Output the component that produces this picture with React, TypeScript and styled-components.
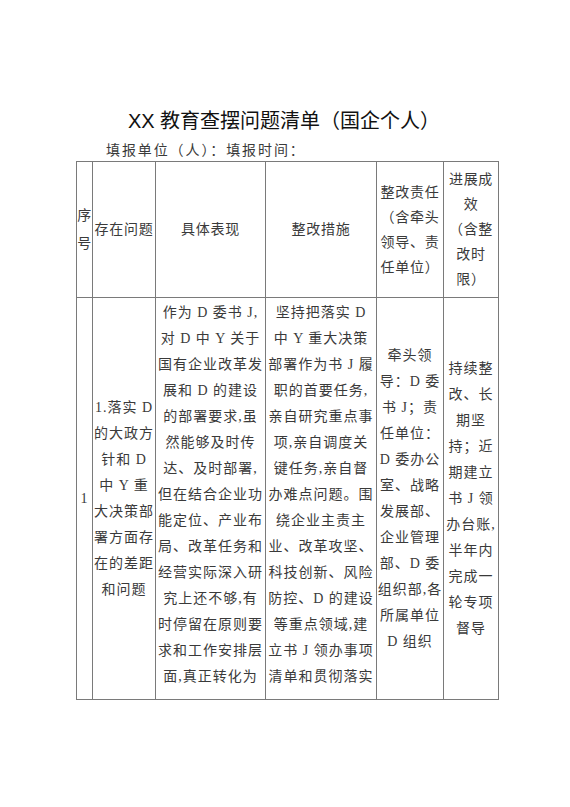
import React from "react";
import styled, { createGlobalStyle } from "styled-components";

const GlobalStyle = createGlobalStyle`
  html, body {
    margin: 0;
    padding: 0;
    background: #ffffff;
  }
  body {
    font-family: "Liberation Serif", "Noto Sans CJK SC", serif;
    color: #333333;
  }
`;

const Page = styled.main`
  width: 570px;
  min-height: 807px;
  padding-top: 107px;
  box-sizing: border-box;
  display: flex;
  flex-direction: column;
`;

const Title = styled.h1`
  margin: 0;
  font-family: "Liberation Sans", "Noto Sans CJK SC", sans-serif;
  font-weight: 400;
  font-size: 20px;
  line-height: 28px;
  color: #111111;
  text-align: center;
  padding-right: 2px;
`;

const Subtitle = styled.div`
  margin-top: 6px;
  padding-left: 106px;
  font-family: "Liberation Serif", "Noto Sans CJK SC", serif;
  font-size: 14px;
  line-height: 20px;
  letter-spacing: 1.9px;
  color: #3a3a3a;
`;

const Table = styled.section`
  margin-left: 76px;
  width: fit-content;
  display: grid;
  grid-template-columns: 15px 62px 109px 110px 66px 54px;
  grid-template-rows: 135px 401px;
  gap: 1px;
  background: #7a7a7a;
  border: 1px solid #7a7a7a;
`;

const Cell = styled.div<{ $lh: number; $top?: boolean; $ls?: number }>`
  background: #ffffff;
  display: flex;
  flex-direction: column;
  align-items: center;
  justify-content: ${(p) => (p.$top ? "flex-start" : "center")};
  padding-top: ${(p) => (p.$top ? "2px" : "0")};
  overflow: hidden;
  font-size: 14px;
  line-height: ${(p) => p.$lh}px;
  letter-spacing: ${(p) => p.$ls ?? 1}px;
  color: #3a3a3a;
  text-align: center;
`;

const Line = styled.span`
  display: block;
  white-space: pre;
`;

type CellData = { lines: string[]; lh?: number; top?: boolean };

const headers: CellData[] = [
  { lines: ["序", "号"], lh: 28 },
  { lines: ["存在问题"] },
  { lines: ["具体表现"] },
  { lines: ["整改措施"] },
  { lines: ["整改责任", "（含牵头", "领导、责", "任单位）"] },
  { lines: ["进展成", "效", "（含整", "改时", "限）"] },
];

const body: CellData[] = [
  { lines: ["1"] },
  {
    lines: [
      "1.落实 D",
      "的大政方",
      "针和 D",
      "中 Y 重",
      "大决策部",
      "署方面存",
      "在的差距",
      "和问题",
    ],
  },
  {
    top: true,
    lines: [
      "作为 D 委书 J,",
      "对 D 中 Y 关于",
      "国有企业改革发",
      "展和 D 的建设",
      "的部署要求,虽",
      "然能够及时传",
      "达、及时部署,",
      "但在结合企业功",
      "能定位、产业布",
      "局、改革任务和",
      "经营实际深入研",
      "究上还不够,有",
      "时停留在原则要",
      "求和工作安排层",
      "面,真正转化为",
    ],
  },
  {
    top: true,
    lines: [
      "坚持把落实 D",
      "中 Y 重大决策",
      "部署作为书 J 履",
      "职的首要任务,",
      "亲自研究重点事",
      "项,亲自调度关",
      "键任务,亲自督",
      "办难点问题。围",
      "绕企业主责主",
      "业、改革攻坚、",
      "科技创新、风险",
      "防控、D 的建设",
      "等重点领域,建",
      "立书 J 领办事项",
      "清单和贯彻落实",
    ],
  },
  {
    lines: [
      "牵头领",
      "导：D 委",
      "书 J；责",
      "任单位：",
      "D 委办公",
      "室、战略",
      "发展部、",
      "企业管理",
      "部、D 委",
      "组织部,各",
      "所属单位",
      "D 组织",
    ],
  },
  {
    lines: [
      "持续整",
      "改、长",
      "期坚",
      "持；近",
      "期建立",
      "书 J 领",
      "办台账,",
      "半年内",
      "完成一",
      "轮专项",
      "督导",
    ],
  },
];

function renderCell(c: CellData, key: string, lh: number, ls: number) {
  return (
    <Cell key={key} $lh={c.lh ?? lh} $top={c.top} $ls={ls}>
      {c.lines.map((l, i) => (
        <Line key={i}>{l}</Line>
      ))}
    </Cell>
  );
}

export default function App() {
  return (
    <>
      <GlobalStyle />
      <Page>
        <Title>XX 教育查摆问题清单（国企个人）</Title>
        <Subtitle>填报单位（人）：填报时间：</Subtitle>
        <Table>
          {headers.map((h, i) => renderCell(h, "h" + i, 25, 0.7))}
          {body.map((b, i) => renderCell(b, "b" + i, 26, 1))}
        </Table>
      </Page>
    </>
  );
}
